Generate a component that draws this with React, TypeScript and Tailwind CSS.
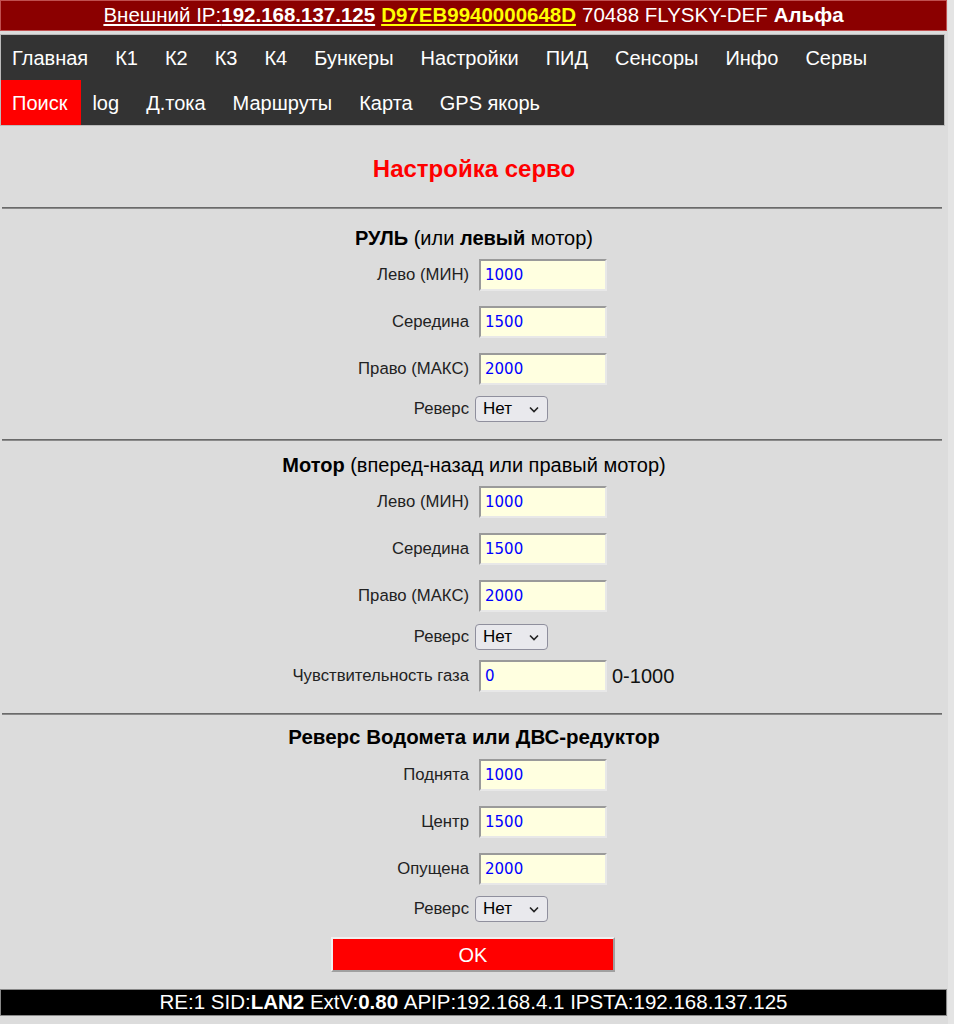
import React from "react";

const NAV1 = ["Главная", "К1", "К2", "К3", "К4", "Бункеры", "Настройки", "ПИД", "Сенсоры", "Инфо", "Сервы"];
const NAV2 = ["Поиск", "log", "Д.тока", "Маршруты", "Карта", "GPS якорь"];

function Field({ label, value, className = "", after }: { label: string; value: string; className?: string; after?: string }) {
  return (
    <div className={`grid grid-cols-[474px_1fr] items-center ${className}`}>
      <span className="pr-[5px] text-right text-[16.7px] text-[#222]">{label}</span>
      <div className="flex items-center">
        <div className="ml-[5px] flex h-[32px] w-[128px] items-center border-2 border-t-[#9a9a9a] border-l-[#9a9a9a] border-r-[#e8e8e8] border-b-[#e8e8e8] bg-[#ffffe0] pl-[4px] font-['DejaVu_Sans',sans-serif] text-[15px] text-[#0000ff]">
          {value}
        </div>
        {after && <span className="ml-[5px] text-[20px] text-[#111]">{after}</span>}
      </div>
    </div>
  );
}

function Reverse({ className = "" }: { className?: string }) {
  return (
    <div className={`grid grid-cols-[474px_1fr] items-center ${className}`}>
      <span className="pr-[5px] text-right text-[16.7px] text-[#222]">Реверс</span>
      <div className="ml-[1px] flex h-[26px] w-[73px] items-center justify-between rounded-[4px] border border-[#8f8f9d] bg-[#e9e9ed] pl-[7px] pr-[8px] text-[17px] text-black">
        <span>Нет</span>
        <svg width="10" height="7" viewBox="0 0 10 7" fill="none" stroke="#222" strokeWidth="1.6">
          <path d="M1 1.5 L5 5.5 L9 1.5" />
        </svg>
      </div>
    </div>
  );
}

function Rule({ className = "" }: { className?: string }) {
  return <div className={`mx-[2px] h-[2px] w-[940px] border-t border-t-[#6a6a6a] border-b border-b-[#8a8a8a] bg-[#555] ${className}`} />;
}

export default function App() {
  return (
    <div className="min-h-[1024px] w-[954px] bg-[#e4e4e4] font-['Liberation_Sans',Arial,sans-serif]">
      <div className="min-h-[1024px] w-[948px] bg-[#dcdcdc]">
        <div className="flex h-[31px] w-[947px] items-center justify-center border border-[#c05050] bg-[#8b0000] text-[20.5px] text-white">
          <span className="underline">
            Внешний IP:<b>192.168.137.125</b>
          </span>
          <span className="ml-[6px] font-bold text-[#ffff00] underline">D97EB9940000648D</span>
          <span className="ml-[6px]">70488 FLYSKY-DEF</span>
          <b className="ml-[6px]">Альфа</b>
        </div>

        <nav className="mt-[3px] w-[945px] border border-[#bbb] bg-[#333] text-[20px] text-white">
          <div className="flex h-[45px] items-center">
            {NAV1.map((n) => (
              <span key={n} className="flex h-full items-center pl-[11px] pr-[16px]">
                {n}
              </span>
            ))}
          </div>
          <div className="flex h-[45px] items-center">
            {NAV2.map((n, i) => (
              <span key={n} className={`flex h-full items-center pl-[11px] ${i === 0 ? "bg-[#ff0000] pr-[14px]" : "pr-[16px]"}`}>
                {n}
              </span>
            ))}
          </div>
        </nav>

        <h2 className="mt-[30px] h-[26px] text-center text-[24px] font-bold leading-[26px] text-[#ff0000]">Настройка серво</h2>

        <Rule className="mt-[25px]" />
        <div className="mt-[18px] h-[22px] text-center text-[20px] leading-[22px] text-black">
          <b>РУЛЬ</b> (или <b>левый</b> мотор)
        </div>
        <Field className="mt-[10px]" label="Лево (МИН)" value="1000" />
        <Field className="mt-[15px]" label="Середина" value="1500" />
        <Field className="mt-[15px]" label="Право (МАКС)" value="2000" />
        <Reverse className="mt-[11px]" />

        <Rule className="mt-[17px]" />
        <div className="mt-[13px] h-[22px] text-center text-[20px] leading-[22px] text-black">
          <b>Мотор</b> (вперед-назад или правый мотор)
        </div>
        <Field className="mt-[10px]" label="Лево (МИН)" value="1000" />
        <Field className="mt-[15px]" label="Середина" value="1500" />
        <Field className="mt-[15px]" label="Право (МАКС)" value="2000" />
        <Reverse className="mt-[12px]" />
        <Field className="mt-[10px]" label="Чувствительность газа" value="0" after="0-1000" />

        <Rule className="mt-[21px]" />
        <div className="mt-[11px] h-[22px] text-center text-[20.5px] font-bold leading-[22px] text-black">
          Реверс Водомета или ДВС-редуктор
        </div>
        <Field className="mt-[11px]" label="Поднята" value="1000" />
        <Field className="mt-[15px]" label="Центр" value="1500" />
        <Field className="mt-[15px]" label="Опущена" value="2000" />
        <Reverse className="mt-[11px]" />

        <div className="mt-[15px] flex justify-center">
          <button className="ml-[-2px] h-[35px] w-[284px] border-2 border-t-[#f0f0f0] border-l-[#f0f0f0] border-r-[#a0a0a0] border-b-[#a0a0a0] bg-[#ff0000] text-[20px] text-white">
            OK
          </button>
        </div>

        <div className="mt-[17px] flex h-[27px] w-[947px] items-center justify-center border border-[#888] bg-black text-[20.5px] text-white">
          RE:1 SID:<b>LAN2</b>&nbsp;ExtV:<b>0.80</b>&nbsp;APIP:192.168.4.1 IPSTA:192.168.137.125
        </div>
      </div>
    </div>
  );
}
